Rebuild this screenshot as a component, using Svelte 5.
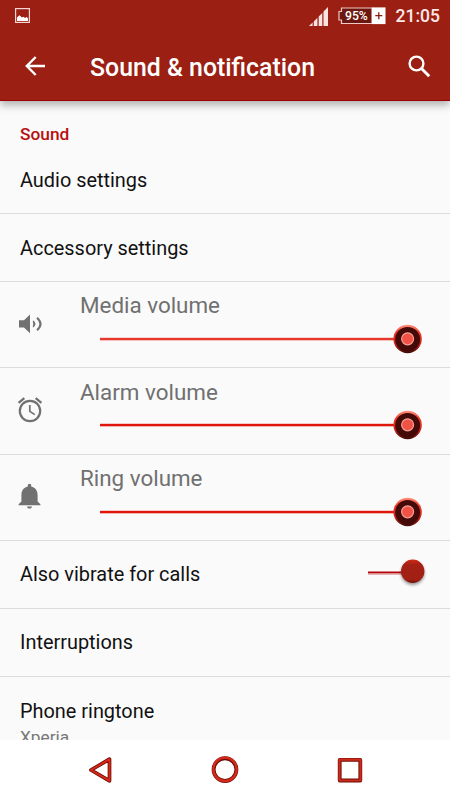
<script>
  const volumes = [
    { name: 'Media volume', icon: 'speaker', track: '#e6392b' },
    { name: 'Alarm volume', icon: 'alarm', track: '#e0150c' },
    { name: 'Ring volume', icon: 'bell', track: '#e0150c' }
  ];
</script>

<div class="screen">
  <header>
    <div class="status">
      <svg class="photo" width="15" height="15" viewBox="0 0 15 15">
        <rect x=".6" y=".6" width="13.8" height="13.8" fill="none" stroke="#f5d5d3" stroke-width="1.2" />
        <path d="M2 13V9.4L4.5 7.2l2.4 2.4 1.4-.9 1.8 1.2L11.500 9l1.500 1.300V13Z" fill="#fff" />
      </svg>
      <svg class="signal" width="19" height="19" viewBox="0 0 19 19" fill="#fbe3e2">
        <path d="M0 19l3.600-3.500V19ZM4.800 14.400l3.600-3.600V19H4.800ZM9.700 9.600L13.300 6V19H9.700ZM14.500 4.600L19 0v19h-4.500Z" />
      </svg>
      <div class="battery">
        <svg width="48" height="18" viewBox="0 0 48 18">
          <path d="M3.500 1H34v15.500H3.500V13H1V4.500h2.500Z" fill="#6c170f" stroke="#f2c9c6" stroke-width="1.200" />
          <rect x="34" y=".4" width="13.500" height="16.700" fill="#fff" />
          <path d="M37.300 8.700h7M40.800 5.200v7" stroke="#8b1d12" stroke-width="1.300" />
        </svg>
        <span>95%</span>
      </div>
      <span class="clock">21:05</span>
    </div>
    <div class="toolbar">
      <svg class="back" width="21" height="20" viewBox="0 0 21 20" fill="none" stroke="#fff" stroke-width="2.400">
        <path d="M10.700 1L1.800 10l8.900 9M2 10h18" />
      </svg>
      <h1>Sound &amp; notification</h1>
      <svg class="search" width="23" height="23" viewBox="0 0 23 23" fill="none" stroke="#fff">
        <circle cx="8.500" cy="8.500" r="6.900" stroke-width="2.400" />
        <path d="M13.200 13.200l8 8" stroke-width="2.900" />
      </svg>
    </div>
  </header>

  <main>
    <h2>Sound</h2>
    <div class="row first">Audio settings</div>
    <div class="row">Accessory settings</div>
    {#each volumes as v}
      <div class="volume">
        <div class="icon">
          {#if v.icon === 'speaker'}
            <svg width="30" height="30" viewBox="0 0 30 30">
              <path d="M4 11.300h5L15 5.500v18.800L9 18.500H4Z" fill="#717171" />
              <path d="M18 11.300q5 3.700 0 7.400l-.2-2q1-1.700 0-3.400Z" fill="#717171" />
              <path d="M22 8.800Q29 15 22 21.200" fill="none" stroke="#717171" stroke-width="2.200" />
            </svg>
          {:else if v.icon === 'alarm'}
            <svg width="30" height="30" viewBox="0 0 30 30" fill="none" stroke="#717171">
              <circle cx="15" cy="16" r="10.200" stroke-width="2.200" />
              <path d="M14.800 10v6.400l5 3.200" stroke-width="1.700" />
              <path d="M3.600 7.800L9.300 3.200M26.400 7.800L20.700 3.200" stroke-width="2.300" />
            </svg>
          {:else}
            <svg width="30" height="30" viewBox="0 0 30 30" fill="#717171">
              <path d="M14.500 1.800c1.100 0 1.700.8 1.700 1.700v.9c4.300 1 6.400 4.400 6.400 8.400v6.700l2.800 2.700v1.100H3.600v-1.100L6.400 19.500v-6.700c0-4 2.100-7.400 6.400-8.400V3.500c0-.9.600-1.700 1.700-1.700ZM12 24.500h5c-.2 1.400-1.200 2-2.500 2S12.200 25.900 12 24.500Z" />
            </svg>
          {/if}
        </div>
        <div class="control">
          <span>{v.name}</span>
          <svg class="slider" width="322" height="30" viewBox="0 0 322 30">
            <defs>
              <linearGradient id="rim-{v.icon}" x1="0" y1="0" x2="0" y2="1">
                <stop offset="0" stop-color="#ff9584" />
                <stop offset=".25" stop-color="#f43c2b" />
                <stop offset=".7" stop-color="#c52118" />
                <stop offset="1" stop-color="#3b0b08" />
              </linearGradient>
            </defs>
            <rect y="13.800" width="296" height="2.500" fill={v.track} />
            <circle cx="307.600" cy="15" r="14.200" fill="url(#rim-{v.icon})" />
            <circle cx="307.600" cy="15.300" r="12.400" fill="#440a07" />
            <circle cx="307.600" cy="14.800" r="6" fill="#f05245" stroke="#f3a095" stroke-width="1.200" />
          </svg>
        </div>
      </div>
    {/each}
    <div class="row">
      Also vibrate for calls
      <svg class="switch" width="64" height="36" viewBox="0 0 64 36">
        <defs>
          <linearGradient id="knob" x1="0" y1="0" x2="0" y2="1">
            <stop offset="0" stop-color="#d22a17" />
            <stop offset=".22" stop-color="#a42114" />
            <stop offset=".85" stop-color="#a12013" />
            <stop offset="1" stop-color="#721108" />
          </linearGradient>
        </defs>
        <path d="M2 17.500h36" stroke="#b3050d" stroke-width="2.200" />
        <path d="M2 19.300h36" stroke="#e9b4b4" stroke-width="1.300" />
        <circle class="knob" cx="46.700" cy="16.200" r="11.700" fill="url(#knob)" />
      </svg>
    </div>
    <div class="row">Interruptions</div>
    <div class="row last">
      <div>Phone ringtone</div>
      <div class="sub">Xperia</div>
    </div>
  </main>

  <nav>
    <svg width="30" height="32" viewBox="0 0 30 32">
      <path d="M6 16L24.500 5.200v21.600Z" fill="none" stroke="#6d0d07" stroke-width="3.700" stroke-linejoin="round" />
      <path d="M6 16L24.500 5.200v21.600Z" fill="none" stroke="#dc2819" stroke-width="2" stroke-linejoin="round" />
    </svg>
    <svg width="30" height="32" viewBox="0 0 30 32" fill="none">
      <circle cx="15" cy="15.600" r="11.400" stroke="#6d0d07" stroke-width="3.900" />
      <circle cx="15" cy="15.300" r="11.700" stroke="#d52a1b" stroke-width="2.400" />
    </svg>
    <svg width="30" height="32" viewBox="0 0 30 32" fill="none">
      <rect x="4.700" y="5.900" width="20.600" height="20.600" stroke="#6d0d07" stroke-width="3.800" stroke-linejoin="round" />
      <rect x="4.500" y="5.700" width="21" height="20.800" stroke="#cc2b1b" stroke-width="2.200" stroke-linejoin="round" />
    </svg>
  </nav>
</div>

<style>
  :global(body) { margin: 0; }
  .screen {
    width: 450px;
    height: 800px;
    display: flex;
    flex-direction: column;
    overflow: hidden;
    background: #fafafa;
    font-family: Roboto, sans-serif;
    color: #111;
  }
  svg { display: block; flex: none; }
  header {
    flex: none;
    height: 101px;
    box-sizing: border-box;
    background: #9b2013;
    border-bottom: 1px solid #960006;
    box-shadow: 0 4px 8px rgba(0, 0, 0, .3);
    color: #fff;
    z-index: 1;
  }
  .status { display: flex; height: 32px; align-items: flex-start; }
  .photo { margin: 8px 0 0 15px; }
  .signal { margin: 7px 0 0 279px; }
  .battery { margin: 7px 0 0 10px; width: 48px; height: 18px; position: relative; }
  .battery span {
    position: absolute;
    left: 7px;
    top: 2px;
    font-size: 12.200px;
    line-height: 15px;
    font-weight: 500;
  }
  .clock { margin: 6px 0 0 9.500px; font-size: 17.500px; line-height: 21px; font-weight: 500; color: #fde9e8; }
  .toolbar { display: flex; align-items: center; height: 68px; }
  .back { margin-left: 24.500px; }
  h1 { margin: 4px 0 0 44.500px; font-size: 24.850px; line-height: 30px; font-weight: 500; width: 318px; white-space: nowrap; }
  .search { margin: 0; }
  main { flex: 1; min-height: 0; overflow: hidden; }
  h2 { margin: 0; padding: 22px 20px 0; height: 24px; font-size: 17.300px; line-height: 22px; font-weight: 500; color: #b8100f; }
  .row {
    display: flex;
    align-items: center;
    justify-content: space-between;
    height: 65px;
    padding: 2px 0 0 20px;
    border-bottom: 1px solid #dcdcdc;
    font-size: 19.900px;
    line-height: 24px;
  }
  .first { height: 64px; }
  .switch { margin: -4px 20px 0 0; }
  .knob { filter: drop-shadow(0 2px 1.500px rgba(0, 0, 0, .4)); }
  .volume { display: flex; height: 85.250px; border-bottom: 1px solid #dcdcdc; }
  .icon { width: 65px; padding: 27px 0 0 15px; box-sizing: border-box; }
  .control { padding-left: 15px; color: #707070; font-size: 22.400px; line-height: 28px; }
  .control span { display: block; padding-top: 9.400px; }
  .slider { margin: 4.800px 0 0 20px; }
  .last { display: block; padding-top: 22.800px; border: 0; }
  .sub { margin-top: 2px; font-size: 17.300px; line-height: 22px; color: #777; }
  nav { display: flex; flex: none; height: 60px; align-items: center; padding: 0 85px; justify-content: space-between; background: #fff; }
</style>
